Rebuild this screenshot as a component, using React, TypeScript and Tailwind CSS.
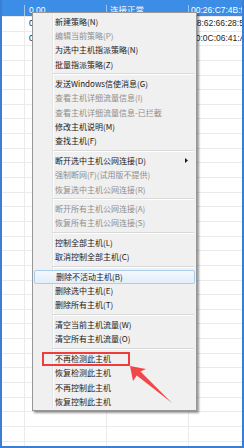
import React from "react";

type Item = { t: string; d?: boolean; sub?: boolean; hover?: boolean } | "sep";

const items: Item[] = [
  { t: "新建策略(N)" },
  { t: "编辑当前策略(P)", d: true },
  { t: "为选中主机指派策略(N)" },
  { t: "批量指派策略(Z)" },
  "sep",
  { t: "发送Windows信使消息(G)" },
  { t: "查看主机详细流量信息(I)", d: true },
  { t: "查看主机详细流量信息-已拦截", d: true },
  { t: "修改主机说明(M)" },
  { t: "查找主机(F)" },
  "sep",
  { t: "断开选中主机公网连接(D)", sub: true },
  { t: "强制断网(F)(试用版不提供)", d: true },
  { t: "恢复选中主机公网连接(R)", d: true },
  "sep",
  { t: "断开所有主机公网连接(A)", d: true },
  { t: "恢复所有主机公网连接(S)", d: true },
  "sep",
  { t: "控制全部主机(L)" },
  { t: "取消控制全部主机(C)" },
  "sep",
  { t: "删除不活动主机(B)", hover: true },
  { t: "删除选中主机(E)" },
  { t: "删除所有主机(T)" },
  "sep",
  { t: "清空当前主机流量(W)" },
  { t: "清空所有主机流量(O)" },
  "sep",
  { t: "不再检测此主机" },
  { t: "恢复检测此主机" },
  { t: "不再控制此主机" },
  { t: "恢复控制此主机" },
];

const rowsData: [string, string, string][] = [
  ["0.00", "连接正常", "B8:62:66:28:5F"],
  ["0.00", "连接正常", "00:0C:06:41:AE"],
];

function Row({ cells, first, blue }: { cells: [string, string, string]; first?: boolean; blue?: boolean }) {
  const h = first ? "h-[17px] pt-[5px]" : "h-[14.65px]";
  const bg = blue ? "bg-[#3b8de6] text-white" : "bg-white text-[#1e1e1e]";
  const line = blue ? "border-[#9cc6f2]" : "border-[#ebebeb]";
  return (
    <div className={`flex shrink-0 border-b border-[#ebebeb] ${h} ${bg} text-[8.5px] leading-[9px]`}>
      <div className={`w-[23px] shrink-0 border-r ${line}`}></div>
      <div className={`w-[82px] shrink-0 border-r ${line} pl-[4px] flex items-center`}>{cells[0]}</div>
      <div className={`w-[82px] shrink-0 border-r ${line} pl-[3px] flex items-center`}>{cells[1]}</div>
      <div className="flex-1 pl-[2px] flex items-center whitespace-nowrap overflow-hidden">{cells[2]}</div>
    </div>
  );
}

export default function App() {
  const empty: [string, string, string] = ["", "", ""];
  return (
    <div
      className="relative w-[244px] h-[448px] overflow-hidden bg-white border-x-2 border-b-2 border-[#3a7fd5]"
      style={{ fontFamily: '"Liberation Sans", "Noto Sans CJK SC", sans-serif' }}
    >
      <div className="flex flex-col">
        <Row first blue cells={["0.00", "连接正常", "00:26:C7:4B:9E"]} />
        {rowsData.map((r, i) => (
          <Row key={i} cells={r} />
        ))}
        {Array.from({ length: 28 }).map((_, i) => (
          <Row key={"e" + i} cells={empty} />
        ))}
      </div>

      {/* context menu */}
      <div
        className="absolute left-[30px] top-[12px] w-[165px] border border-[#979797] bg-[#f0f0f0] pt-[1.5px] pb-[1px] shadow-[2px_2px_2px_rgba(0,0,0,0.4)] flex flex-col"
        style={{ fontFamily: '"Noto Sans CJK SC", sans-serif' }}
      >
        <div className="absolute left-[19px] top-[1px] bottom-[1px] w-[2px] border-l border-[#e2e3e3] border-r border-r-white"></div>
        {items.map((it, i) =>
          it === "sep" ? (
            <div key={i} className="h-[5.3px] flex items-center relative">
              <div className="ml-[20px] mr-[2px] flex-1 h-[2px] border-t border-[#d9d9d9] border-b border-b-white"></div>
            </div>
          ) : (
            <div
              key={i}
              className={`relative mx-[1px] h-[14.3px] flex items-center pl-[21px] text-[8px] leading-none whitespace-nowrap ${
                it.d ? "text-[#8e8e8e]" : "text-[#1a1a1a]"
              } ${
                it.hover
                  ? "border border-[#a9cdee] rounded-[2px] bg-gradient-to-b from-[#f3f8fd] to-[#e3eef9] pl-[20px]"
                  : ""
              }`}
            >
              {it.t}
              {it.sub && (
                <svg className="absolute right-[7px] top-[4.5px]" width="3" height="5" viewBox="0 0 3 5">
                  <polygon points="0,0 3,2.5 0,5" fill="#1a1a1a" />
                </svg>
              )}
            </div>
          )
        )}
      </div>

      {/* red annotation box */}
      <div className="absolute left-[40px] top-[352px] w-[88px] h-[14px] border-2 border-[#ee3d3d]"></div>

      {/* red arrow */}
      <svg className="absolute left-[-2px] top-0 pointer-events-none" width="244" height="448" viewBox="0 0 244 448">
        <polygon
          points="130,366 146,369 140.5,371.5 172,403 136.8,375.5 133,381"
          fill="#f04848"
        />
      </svg>
    </div>
  );
}
